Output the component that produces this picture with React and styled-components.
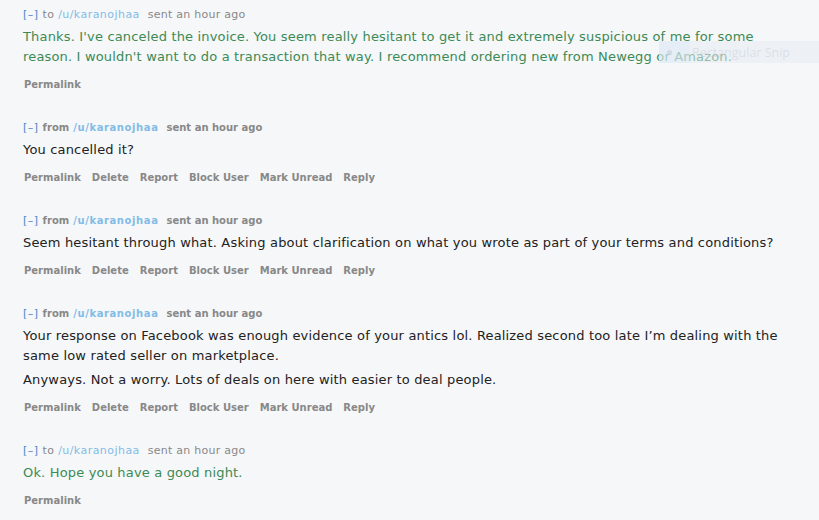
import React from "react";
import styled, { createGlobalStyle } from "styled-components";

const GlobalStyle = createGlobalStyle`
  html, body {
    margin: 0;
    padding: 0;
    background: #f6f7f9;
  }
  body {
    font-family: "DejaVu Sans", Verdana, sans-serif;
  }
`;

const Page = styled.div`
  position: relative;
  width: 819px;
  height: 520px;
  overflow: hidden;
  box-sizing: border-box;
  padding: 9px 0 0 23px;
  background: #f6f7f9;
`;

const Message = styled.div`
  margin-bottom: 31px;
  max-width: 770px;
`;

const Tagline = styled.div`
  font-size: ${(p) => (p.$bold ? "10px" : "11px")};
  letter-spacing: ${(p) => (p.$bold ? "0" : "0.25px")};
  line-height: 12px;
  color: #888;
  font-weight: ${(p) => (p.$bold ? "bold" : "normal")};
  white-space: nowrap;
`;

const Expand = styled.span`
  color: #4a88c8;
  font-weight: normal;
  font-size: 11px;
  letter-spacing: 0.5px;
  margin-right: 4px;
`;

const UserLink = styled.span`
  color: #82bce6;
  margin: 0 8px 0 4px;
  letter-spacing: ${(p) => (p.$bold ? "0.6px" : "0.45px")};
`;

const Body = styled.div`
  margin-top: 6px;
  font-size: 13px;
  letter-spacing: 0.17px;
  line-height: 20px;
  color: ${(p) => (p.$sent ? "#3c8a55" : "#222")};

  p {
    margin: 0 0 4px;
  }
  p:last-child {
    margin-bottom: 0;
  }
`;

const Buttons = styled.ul`
  list-style: none;
  margin: 12px 0 0;
  padding: 0 0 0 1px;
  display: flex;
  gap: 11px;
  font-size: 10px;
  line-height: 12px;
  font-weight: bold;
  color: #888;
`;

const Snip = styled.div`
  position: absolute;
  left: 659px;
  top: 41px;
  width: 160px;
  height: 22px;
  display: flex;
  align-items: stretch;
  background: rgba(228, 236, 244, 0.5);
  font-family: "Open Sans", "Noto Sans", sans-serif;
  font-size: 12.5px;
  color: rgba(205, 210, 218, 0.6);
`;

const SnipIcon = styled.div`
  width: 31px;
  display: flex;
  align-items: center;
  padding-left: 8px;
  box-sizing: border-box;
  background: rgba(214, 230, 245, 0.35);
`;

const SnipDot = styled.span`
  width: 5px;
  height: 5px;
  border-radius: 50%;
  background: rgba(190, 200, 212, 0.5);
`;

const SnipLabel = styled.span`
  display: flex;
  align-items: center;
  padding-left: 2px;
`;

const messages = [
  {
    dir: "to",
    sent: true,
    paras: [
      "Thanks. I've canceled the invoice. You seem really hesitant to get it and extremely suspicious of me for some reason. I wouldn't want to do a transaction that way. I recommend ordering new from Newegg or Amazon.",
    ],
  },
  { dir: "from", paras: ["You cancelled it?"] },
  {
    dir: "from",
    paras: [
      "Seem hesitant through what. Asking about clarification on what you wrote as part of your terms and conditions?",
    ],
  },
  {
    dir: "from",
    paras: [
      "Your response on Facebook was enough evidence of your antics lol. Realized second too late I\u2019m dealing with the same low rated seller on marketplace.",
      "Anyways. Not a worry. Lots of deals on here with easier to deal people.",
    ],
  },
  { dir: "to", sent: true, paras: ["Ok. Hope you have a good night."] },
];

const fullActions = ["Permalink", "Delete", "Report", "Block User", "Mark Unread", "Reply"];

export default function App() {
  return (
    <Page>
      <GlobalStyle />
      {messages.map((m, i) => {
        const bold = m.dir === "from";
        return (
          <Message key={i}>
            <Tagline $bold={bold}>
              <Expand>[&ndash;]</Expand>
              {m.dir}
              <UserLink $bold={bold}>/u/karanojhaa</UserLink>
              sent an hour ago
            </Tagline>
            <Body $sent={m.sent}>
              {m.paras.map((p, j) => (
                <p key={j}>{p}</p>
              ))}
            </Body>
            <Buttons>
              {(m.sent ? ["Permalink"] : fullActions).map((a) => (
                <li key={a}>{a}</li>
              ))}
            </Buttons>
          </Message>
        );
      })}
      <Snip>
        <SnipIcon>
          <SnipDot />
        </SnipIcon>
        <SnipLabel>Rectangular Snip</SnipLabel>
      </Snip>
    </Page>
  );
}
